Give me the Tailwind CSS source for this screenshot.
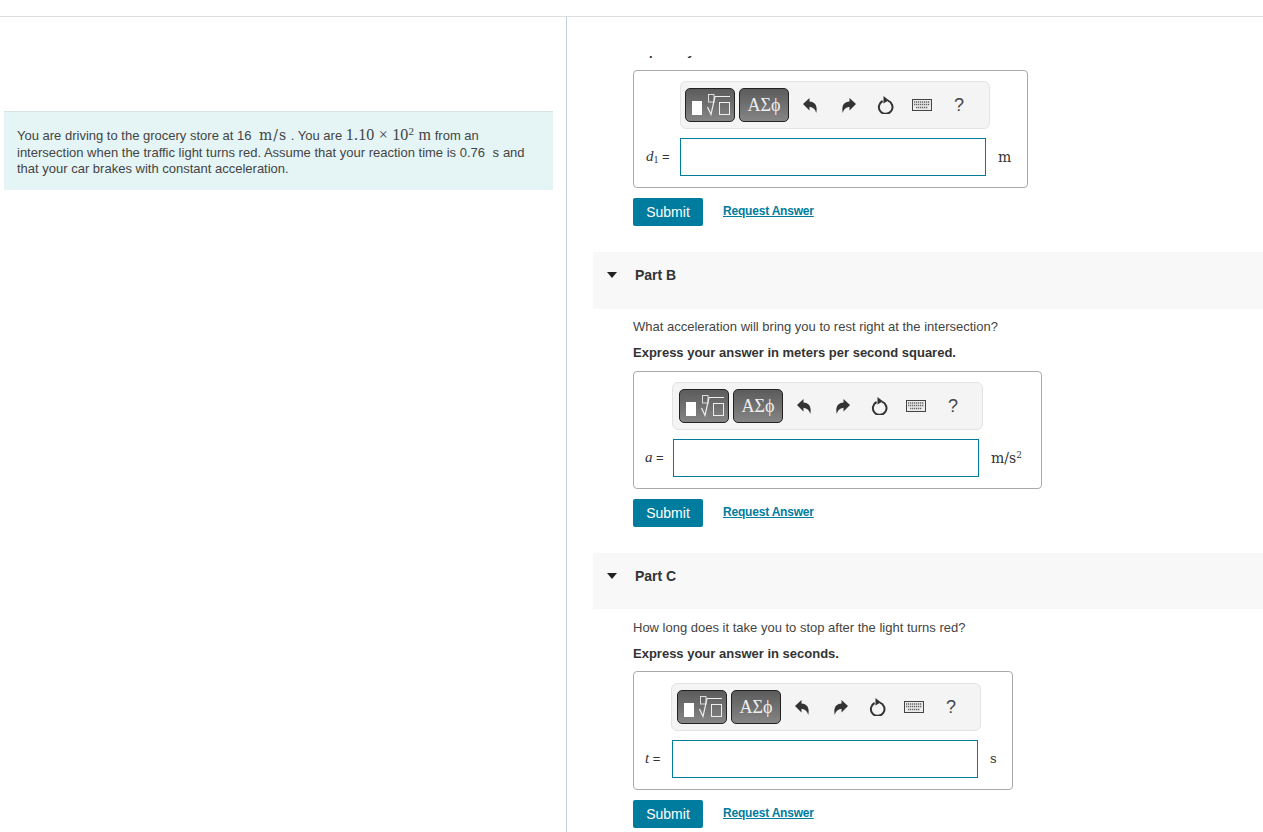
<!DOCTYPE html>
<html lang="en">
<head>
  <meta charset="UTF-8">
  <title>Part B</title>
  <script src="https://cdn.jsdelivr.net/npm/@tailwindcss/browser@4"></script>
</head>
<body class="bg-white text-[#333] font-['Liberation_Sans',Arial,sans-serif]">

  <!-- shared icons -->
  <svg class="hidden">
    <symbol id="i-undo" viewBox="0 0 14 15"><path d="M0 6 L6.5 0 V3.6 C11.5 3.8 15 7.5 13.2 15 C12.4 11.6 10.4 9.2 6.5 8.8 V12.4 Z" fill="#333"/></symbol>
    <symbol id="i-redo" viewBox="0 0 14 15"><path d="M14 6 L7.5 0 V3.6 C2.5 3.8 -1 7.5 .8 15 C1.6 11.6 3.6 9.2 7.5 8.8 V12.4 Z" fill="#333"/></symbol>
    <symbol id="i-reset" viewBox="0 0 17 18"><path d="M5.6 5 A6.8 6.8 0 1 0 10.8 4.6" fill="none" stroke="#333" stroke-width="2"/><path d="M6.5 0 L11.8 4.2 L6.5 7.6 Z" fill="#333"/></symbol>
    <symbol id="i-keys" viewBox="0 0 20 12"><rect x="0.5" y="0.5" width="19" height="11" fill="#ececec" stroke="#444"/><path d="M2 3h16M2 5.5h16M4 8.5h12" stroke="#666" stroke-width="1.4" stroke-dasharray="1.3 .7" fill="none"/></symbol>
    <symbol id="i-templ" viewBox="0 0 48 32"><rect x="6" y="12" width="10" height="14" fill="#fff"/><rect x="22.5" y="5.5" width="5.5" height="7.5" fill="none" stroke="#ddd"/><path d="M21.5 18l3.5 7.5 4-18h15" fill="none" stroke="#eee" stroke-width="1.2"/><rect x="33.5" y="13.5" width="10" height="12" fill="none" stroke="#eee"/></symbol>
  </svg>

  <div class="h-4 border-b border-[#ddd] box-content"></div>

  <div class="flex h-[815px] overflow-hidden">
    <!-- left column -->
    <div class="w-[567px] shrink-0 border-r border-[#bfd0d8] pl-1 pr-[13px] pt-[94px]">
      <div class="h-[79px] bg-[#e5f5f6] border-t border-[#d5e3e5] pl-[13px] pt-[15px] text-[13px] leading-[16.5px] text-[#444]">
        <p class="w-[520px]">You are driving to the grocery store at 16 <span class="font-['DejaVu_Serif',serif] text-[14px] tracking-[1px] ml-1">m/s</span> . You are <span class="font-['Liberation_Serif',serif] text-[16px] tracking-[0.2px]">1.10 × 10<sup class="text-[11px] leading-none">2</sup> m</span> from an intersection when the traffic light turns red. Assume that your reaction time is 0.76 <span class="font-['DejaVu_Serif',serif] text-[13px] ml-1">s</span> and that your car brakes with constant acceleration.</p>
      </div>
    </div>

    <!-- right column -->
    <div class="flex-1 pl-[26px]">
      <!-- Part A, scrolled mostly out of view -->
      <div class="ml-10 h-[3px] mt-[39px] overflow-hidden">
        <p class="-mt-[13px] text-[13px] font-bold leading-[16px]">Express your answer</p>
      </div>

      <div class="ml-10 mt-[11px] w-[395px] h-[118px] border border-[#aaa] rounded-[4px] pl-[46px] pt-[10px]">
        <div class="flex items-center w-[310px] h-[48px] bg-[#f4f4f4] border border-[#e3e3e3] rounded-[6px] pl-[4px]">
          <button class="w-[50px] h-[34px] rounded-[5px] border border-[#222] bg-gradient-to-b from-[#5c5c5c] to-[#858585]"><svg class="w-[48px] h-[32px]"><use href="#i-templ"/></svg></button>
          <button class="w-[50px] h-[34px] ml-1 rounded-[5px] border border-[#222] bg-gradient-to-b from-[#5c5c5c] to-[#858585] text-[#eee] font-['Liberation_Serif',serif] text-[18px]">ΑΣϕ</button>
          <svg class="w-[14px] h-[15px] ml-[14px]"><use href="#i-undo"/></svg>
          <svg class="w-[14px] h-[15px] ml-[25px]"><use href="#i-redo"/></svg>
          <svg class="w-[17px] h-[18px] ml-[21px]"><use href="#i-reset"/></svg>
          <svg class="w-[20px] h-[12px] ml-[18px]"><use href="#i-keys"/></svg>
          <span class="ml-[22px] text-[18px] text-[#444]">?</span>
        </div>
        <div class="flex items-center mt-[9px] -ml-[34px]">
          <span class="w-[34px] mb-[2px] text-[13px] whitespace-nowrap"><i class="font-['Liberation_Serif',serif] text-[15px]">d</i><sub class="text-[10px] font-['Liberation_Serif',serif]">1</sub> =</span>
          <div class="w-[306px] h-[38px] border border-[#007c9e] bg-white"></div>
          <span class="ml-3 font-['DejaVu_Serif',serif] text-[14px]">m</span>
        </div>
      </div>
      <div class="ml-10 mt-[10px] flex items-center">
        <button class="w-[70px] h-[28px] rounded-[2px] bg-[#007c9e] text-white text-[14px]">Submit</button>
        <a class="ml-5 mb-[2px] text-[12px] font-bold tracking-[-0.2px] text-[#007c9e] underline" href="#">Request Answer</a>
      </div>

      <!-- Part B -->
      <div class="mt-[26px] h-[57px] bg-[#f8f8f8] flex items-start pt-[16px] pl-[14px]">
        <span class="mt-[4px] w-0 h-0 border-x-[5px] border-x-transparent border-t-[6px] border-t-[#222]"></span>
        <span class="ml-[18px] text-[14px] font-bold leading-[14px]">Part B</span>
      </div>
      <p class="ml-10 mt-[10px] text-[13px] leading-[16px] text-[#444]">What acceleration will bring you to rest right at the intersection?</p>
      <p class="ml-10 mt-[10px] text-[13px] font-bold leading-[16px]">Express your answer in meters per second squared.</p>

      <div class="ml-10 mt-[10px] w-[409px] h-[118px] border border-[#aaa] rounded-[4px] pl-[38px] pt-[10px]">
        <div class="flex items-center w-[311px] h-[48px] bg-[#f4f4f4] border border-[#e3e3e3] rounded-[6px] pl-[6px]">
          <button class="w-[50px] h-[34px] rounded-[5px] border border-[#222] bg-gradient-to-b from-[#5c5c5c] to-[#858585]"><svg class="w-[48px] h-[32px]"><use href="#i-templ"/></svg></button>
          <button class="w-[50px] h-[34px] ml-1 rounded-[5px] border border-[#222] bg-gradient-to-b from-[#5c5c5c] to-[#858585] text-[#eee] font-['Liberation_Serif',serif] text-[18px]">ΑΣϕ</button>
          <svg class="w-[14px] h-[15px] ml-[14px]"><use href="#i-undo"/></svg>
          <svg class="w-[14px] h-[15px] ml-[25px]"><use href="#i-redo"/></svg>
          <svg class="w-[17px] h-[18px] ml-[21px]"><use href="#i-reset"/></svg>
          <svg class="w-[20px] h-[12px] ml-[18px]"><use href="#i-keys"/></svg>
          <span class="ml-[22px] text-[18px] text-[#444]">?</span>
        </div>
        <div class="flex items-center mt-[9px] -ml-[27px]">
          <span class="w-[28px] mb-[2px] text-[13px] whitespace-nowrap"><i class="font-['Liberation_Serif',serif] text-[15px]">a</i> =</span>
          <div class="w-[306px] h-[38px] border border-[#007c9e] bg-white"></div>
          <span class="ml-3 font-['DejaVu_Serif',serif] text-[14px]">m/s<sup class="text-[9px]">2</sup></span>
        </div>
      </div>
      <div class="ml-10 mt-[10px] flex items-center">
        <button class="w-[70px] h-[28px] rounded-[2px] bg-[#007c9e] text-white text-[14px]">Submit</button>
        <a class="ml-5 mb-[2px] text-[12px] font-bold tracking-[-0.2px] text-[#007c9e] underline" href="#">Request Answer</a>
      </div>

      <!-- Part C -->
      <div class="mt-[26px] h-[56px] bg-[#f8f8f8] flex items-start pt-[16px] pl-[14px]">
        <span class="mt-[4px] w-0 h-0 border-x-[5px] border-x-transparent border-t-[6px] border-t-[#222]"></span>
        <span class="ml-[18px] text-[14px] font-bold leading-[14px]">Part C</span>
      </div>
      <p class="ml-10 mt-[11px] text-[13px] leading-[16px] text-[#444]">How long does it take you to stop after the light turns red?</p>
      <p class="ml-10 mt-[10px] text-[13px] font-bold leading-[16px]">Express your answer in seconds.</p>

      <div class="ml-10 mt-[9px] w-[380px] h-[119px] border border-[#aaa] rounded-[4px] pl-[37px] pt-[11px]">
        <div class="flex items-center w-[310px] h-[48px] bg-[#f4f4f4] border border-[#e3e3e3] rounded-[6px] pl-[5px]">
          <button class="w-[50px] h-[34px] rounded-[5px] border border-[#222] bg-gradient-to-b from-[#5c5c5c] to-[#858585]"><svg class="w-[48px] h-[32px]"><use href="#i-templ"/></svg></button>
          <button class="w-[50px] h-[34px] ml-1 rounded-[5px] border border-[#222] bg-gradient-to-b from-[#5c5c5c] to-[#858585] text-[#eee] font-['Liberation_Serif',serif] text-[18px]">ΑΣϕ</button>
          <svg class="w-[14px] h-[15px] ml-[14px]"><use href="#i-undo"/></svg>
          <svg class="w-[14px] h-[15px] ml-[25px]"><use href="#i-redo"/></svg>
          <svg class="w-[17px] h-[18px] ml-[21px]"><use href="#i-reset"/></svg>
          <svg class="w-[20px] h-[12px] ml-[18px]"><use href="#i-keys"/></svg>
          <span class="ml-[22px] text-[18px] text-[#444]">?</span>
        </div>
        <div class="flex items-center mt-[9px] -ml-[26px]">
          <span class="w-[27px] mb-[2px] text-[13px] whitespace-nowrap"><i class="font-['Liberation_Serif',serif] text-[15px]">t</i> =</span>
          <div class="w-[306px] h-[38px] border border-[#007c9e] bg-white"></div>
          <span class="ml-3 font-['DejaVu_Serif',serif] text-[13px]">s</span>
        </div>
      </div>
      <div class="ml-10 mt-[10px] flex items-center">
        <button class="w-[70px] h-[28px] rounded-[2px] bg-[#007c9e] text-white text-[14px]">Submit</button>
        <a class="ml-5 mb-[2px] text-[12px] font-bold tracking-[-0.2px] text-[#007c9e] underline" href="#">Request Answer</a>
      </div>
    </div>
  </div>
</body>
</html>
